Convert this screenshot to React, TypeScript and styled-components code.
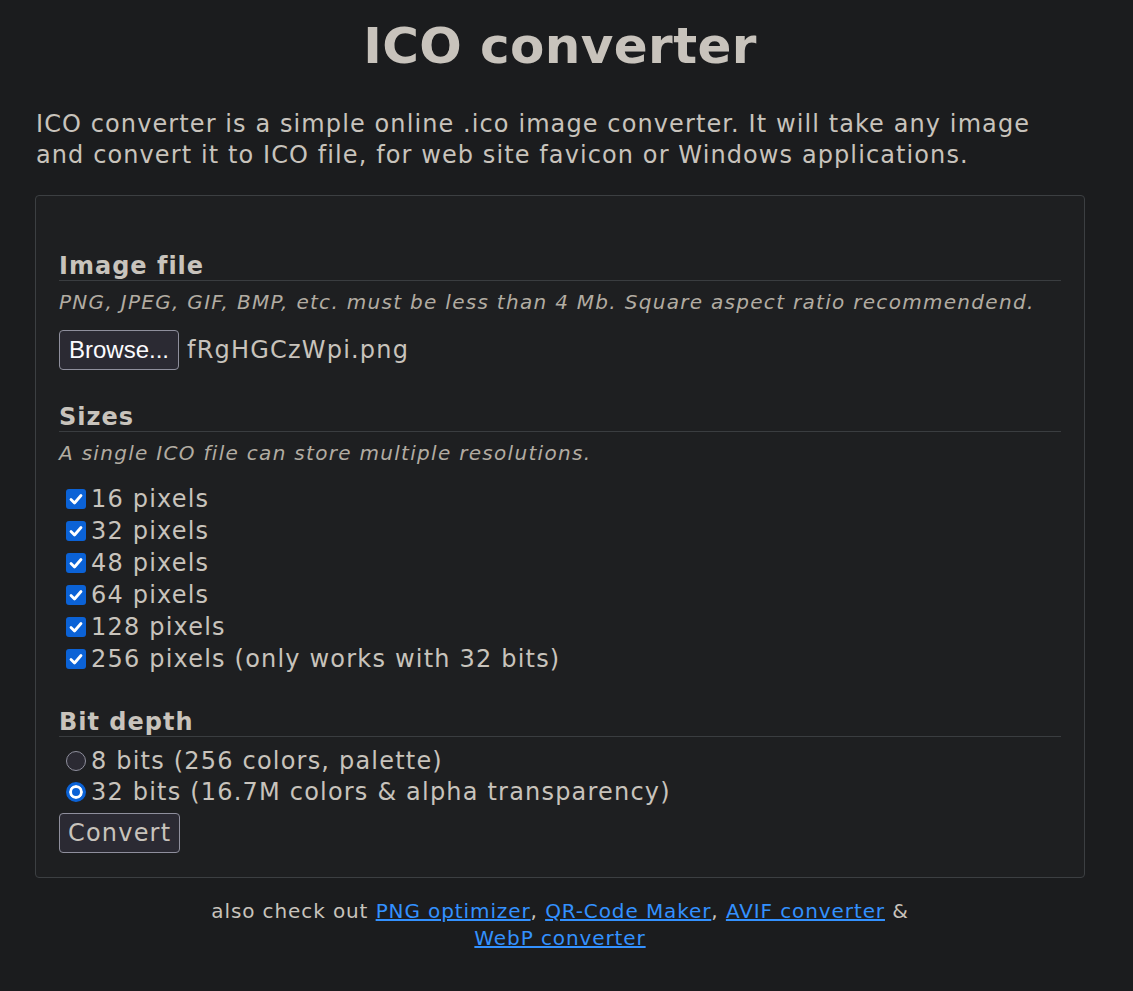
import { useState } from "react";
import styled, { createGlobalStyle } from "styled-components";

const GlobalStyle = createGlobalStyle`
    html, body {
        margin: 0;
        padding: 0;
        background: #1b1c1e;
    }
    body {
        color: #c8c3bc;
        font-family: "DejaVu Sans", Verdana, sans-serif;
        letter-spacing: 1.2px;
    }
`

const Page = styled.div`
    width: 1050px;
    margin-left: 35px;
    padding-top: 16px;
    padding-bottom: 40px;
`

const Title = styled.h1`
    margin: 0;
    text-align: center;
    font-size: 50px;
    font-weight: 700;
    line-height: 60px;
    letter-spacing: 0.4px;
`

const Intro = styled.p`
    margin: 33px 0 24px 1px;
    font-size: 24px;
    line-height: 31px;
    letter-spacing: 1.1px;
`

const Card = styled.form`
    border: 1px solid #3c3f42;
    border-radius: 4px;
    background: #1e1f21;
    padding: 56px 23px 24px;
`

const Section = styled.div`
    margin-bottom: 33px;

    &:last-child {
        margin-bottom: 0;
    }
`

const Heading = styled.h3`
    margin: 0;
    font-size: 24px;
    font-weight: 700;
    line-height: 28px;
    letter-spacing: 1px;
    border-bottom: 1px solid #3a3d40;
`

const Hint = styled.p`
    margin: 7px 0 14px;
    font-size: 20px;
    font-style: italic;
    line-height: 28px;
    letter-spacing: 1.3px;
    color: #b2aca2;
`

const FileRow = styled.div`
    display: flex;
    align-items: center;
    gap: 8px;
    font-size: 24px;
`

const Button = styled.button<{ $bright?: boolean }>`
    height: 40px;
    padding: 0 ${({ $bright }) => ($bright ? "9px" : "8px")};
    border: 1px solid #8f8f9d;
    border-radius: 4px;
    background: #2b2a33;
    color: ${({ $bright }) => ($bright ? "#fbfbfe" : "#c8c3bc")};
    font-family: ${({ $bright }) =>
        $bright ? '"Liberation Sans", Arial, sans-serif' : '"DejaVu Sans", sans-serif'};
    font-size: 24px;
    letter-spacing: ${({ $bright }) => ($bright ? "0" : "1.2px")};
    cursor: pointer;
`

const OptionList = styled.div`
    display: flex;
    flex-direction: column;
    margin-top: 16px;
`

const Option = styled.label`
    display: flex;
    align-items: center;
    gap: 5px;
    height: 32px;
    padding-left: 7px;
    font-size: 24px;
    cursor: pointer;

    input {
        display: none;
    }
`

const Box = styled.span<{ $on: boolean }>`
    display: inline-flex;
    align-items: center;
    justify-content: center;
    width: 20px;
    height: 20px;
    box-sizing: border-box;
    border-radius: 3px;
    background: ${({ $on }) => ($on ? "#0b62d6" : "#2b2a33")};
    border: ${({ $on }) => ($on ? "none" : "1px solid #8f8f9d")};
`

const Radio = styled.span<{ $on: boolean }>`
    display: inline-block;
    width: 20px;
    height: 20px;
    box-sizing: border-box;
    border-radius: 50%;
    background: ${({ $on }) => ($on ? "#0b62d6" : "#2b2a33")};
    border: ${({ $on }) => ($on ? "3px solid #0b62d6" : "1px solid #8f8f9d")};
    box-shadow: ${({ $on }) => ($on ? "inset 0 0 0 3px #fff" : "none")};
`

const RadioList = styled(OptionList)`
    margin-top: 8px;
    margin-bottom: 6px;

    ${Option} {
        height: 31px;
    }
`

const Footer = styled.p`
    margin: 20px 0 0;
    text-align: center;
    font-size: 20px;
    line-height: 27px;
    letter-spacing: 0.9px;
`

const Link = styled.a`
    color: #3391ff;
    text-decoration: underline;
`

const Check = () => (
    <svg width="16" height="16" viewBox="0 0 16 16">
        <path d="M3 8.5 L6.5 12 L13 4.5" fill="none" stroke="#fff" strokeWidth="2.8" strokeLinecap="round" strokeLinejoin="round" />
    </svg>
)

const sizeOptions = [
    { value: 16, label: "16 pixels" },
    { value: 32, label: "32 pixels" },
    { value: 48, label: "48 pixels" },
    { value: 64, label: "64 pixels" },
    { value: 128, label: "128 pixels" },
    { value: 256, label: "256 pixels (only works with 32 bits)" },
];

export default function App() {
    const [sizes, setSizes] = useState<number[]>(sizeOptions.map(s => s.value));
    const [depth, setDepth] = useState<number>(32);

    const toggle = (v: number) => {
        setSizes(prev => (prev.includes(v) ? prev.filter(x => x !== v) : [...prev, v]));
    }

    return (
        <>
            <GlobalStyle />
            <Page>
                <Title>ICO converter</Title>
                <Intro>
                    ICO converter is a simple online .ico image converter. It will take any image
                    and convert it to ICO file, for web site favicon or Windows applications.
                </Intro>

                <Card onSubmit={e => e.preventDefault()}>
                    <Section>
                        <Heading>Image file</Heading>
                        <Hint>PNG, JPEG, GIF, BMP, etc. must be less than 4 Mb. Square aspect ratio recommendend.</Hint>
                        <FileRow>
                            <Button type="button" $bright>Browse...</Button>
                            <span>fRgHGCzWpi.png</span>
                        </FileRow>
                    </Section>

                    <Section>
                        <Heading>Sizes</Heading>
                        <Hint>A single ICO file can store multiple resolutions.</Hint>
                        <OptionList>
                            {sizeOptions.map(opt => {
                                const on = sizes.includes(opt.value);
                                return (
                                    <Option key={opt.value}>
                                        <input type="checkbox" checked={on} onChange={() => toggle(opt.value)} />
                                        <Box $on={on}>{on && <Check />}</Box>
                                        {opt.label}
                                    </Option>
                                );
                            })}
                        </OptionList>
                    </Section>

                    <Section>
                        <Heading>Bit depth</Heading>
                        <RadioList>
                            <Option>
                                <input type="radio" name="depth" checked={depth === 8} onChange={() => setDepth(8)} />
                                <Radio $on={depth === 8} />
                                8 bits (256 colors, palette)
                            </Option>
                            <Option>
                                <input type="radio" name="depth" checked={depth === 32} onChange={() => setDepth(32)} />
                                <Radio $on={depth === 32} />
                                32 bits (16.7M colors &amp; alpha transparency)
                            </Option>
                        </RadioList>
                        <Button type="submit">Convert</Button>
                    </Section>
                </Card>

                <Footer>
                    also check out <Link href="#">PNG optimizer</Link>, <Link href="#">QR-Code Maker</Link>,{" "}
                    <Link href="#">AVIF converter</Link> &amp;
                    <br />
                    <Link href="#">WebP converter</Link>
                </Footer>
            </Page>
        </>
    )
}
